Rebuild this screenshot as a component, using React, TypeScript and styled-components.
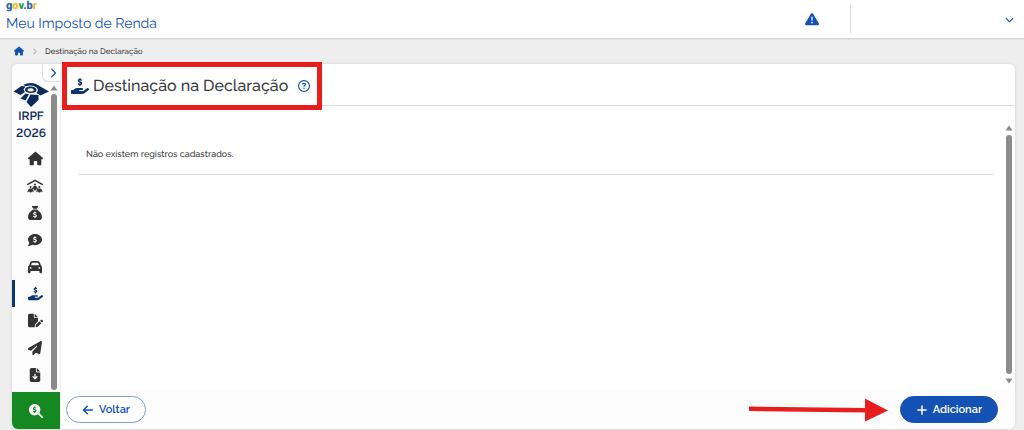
import React from "react";
import styled, { createGlobalStyle } from "styled-components";
import {
  FaArrowLeft,
  FaCar,
  FaChevronDown,
  FaChevronRight,
  FaCommentDollar,
  FaFileArrowDown,
  FaFilePen,
  FaHandHoldingDollar,
  FaHouse,
  FaMagnifyingGlassDollar,
  FaPaperPlane,
  FaPeopleRoof,
  FaPlus,
  FaRegCircleQuestion,
  FaSackDollar,
  FaTriangleExclamation,
} from "react-icons/fa6";

const blue = "#1351b4";
const navy = "#0c2a5e";
const red = "#e81e1e";

const GlobalStyle = createGlobalStyle`
  *, *::before, *::after { box-sizing: border-box; }
  body {
    margin: 0;
    background: #eeeeee;
    color: #3c3c3c;
    font-family: Raleway, "Open Sans", sans-serif;
    font-size: 10px;
    font-variant-numeric: lining-nums;
    text-rendering: geometricPrecision;
  }
  button { font: inherit; cursor: pointer; }
  svg { display: block; flex: none; }
`;

const Page = styled.div`
  display: flex;
  flex-direction: column;
  min-height: 100vh;
`;

const Header = styled.header`
  display: flex;
  align-items: center;
  justify-content: space-between;
  height: 38px;
  padding: 0 10px 0 6px;
  background: #ffffff;
  box-shadow: 0 1px 2px #d0d0d0;
`;

const Brand = styled.div`
  display: flex;
  flex-direction: column;
  height: 38px;
`;

const GovLogo = styled.div`
  font-family: Roboto, sans-serif;
  font-size: 11px;
  font-weight: 900;
  line-height: 12px;
`;

const Letter = styled.span<{ $color: string }>`
  color: ${(p) => p.$color};
`;

const AppName = styled.a`
  color: ${blue};
  font-size: 14px;
  line-height: 24px;
  text-decoration: none;
`;

const HeaderTools = styled.div`
  display: flex;
  align-items: center;
`;

const IconButton = styled.button`
  display: flex;
  align-items: center;
  padding: 0;
  border: 0;
  background: none;
  color: ${blue};
`;

const UserMenu = styled.div`
  display: flex;
  justify-content: flex-end;
  align-items: center;
  width: 164px;
  height: 28px;
  margin-left: 31px;
  border-left: 1px solid #dddddd;
`;

const Breadcrumb = styled.nav`
  display: flex;
  align-items: center;
  gap: 7px;
  height: 26px;
  padding: 0 14px;
  font-size: 8px;
  font-weight: 500;
`;

const HomeLink = styled.a`
  color: ${blue};
`;

const Separator = styled.span`
  color: #aaaaaa;
`;

const Panel = styled.div`
  display: flex;
  flex: 1;
  margin: 0 9px 1px 12px;
  border-radius: 6px;
  background: #ffffff;
  box-shadow: 0 0 3px #cccccc;
`;

const Sidebar = styled.aside`
  display: flex;
  flex-direction: column;
  width: 49px;
  border-right: 1px solid #eeeeee;
  border-radius: 6px 0 0 6px;
  background: #fcfcfc;
`;

const SidebarBody = styled.div`
  display: flex;
  flex: 1;
`;

const SidebarMain = styled.div`
  display: flex;
  flex: 1;
  flex-direction: column;
  padding-top: 18px;
`;

const SidebarEdge = styled.div`
  display: flex;
  flex-direction: column;
  align-items: flex-end;
  width: 10px;
`;

const Toggle = styled(IconButton)`
  flex: none;
  justify-content: center;
  width: 18px;
  height: 18px;
  padding-left: 2px;
  border: 1px solid #dddddd;
  border-width: 0 0 1px 1px;
  border-radius: 0 0 0 6px;
  background: #ffffff;
`;

const Product = styled.div`
  display: flex;
  flex-direction: column;
  align-items: center;
  color: ${navy};
  font-size: 12px;
  font-weight: 600;
  line-height: 17px;
`;

const Menu = styled.nav`
  display: flex;
  flex-direction: column;
  padding-top: 3px;
`;

const MenuItem = styled.a<{ $active?: boolean }>`
  display: flex;
  align-items: center;
  justify-content: center;
  height: 27px;
  padding-left: 5px;
  border-left: 3px solid ${(p) => (p.$active ? "#0c326f" : "transparent")};
  color: ${(p) => (p.$active ? "#0c326f" : "#333333")};
`;

const SearchButton = styled.button`
  display: flex;
  align-items: center;
  justify-content: center;
  height: 37px;
  border: 0;
  border-radius: 0 0 0 6px;
  background: #168821;
  color: #ffffff;
`;

const ScrollTrack = styled.div`
  display: flex;
  flex: 1;
  flex-direction: column;
  align-items: center;
  gap: 3px;
  width: 12px;
  padding: 3px 0 2px;
`;

const BodyScroll = styled(ScrollTrack)`
  flex: none;
  gap: 4px;
  padding: 4px 0 6px;
`;

const ScrollThumb = styled.div`
  flex: 1;
  width: 6px;
  border-radius: 3px;
  background: #8b8b8b;
`;

const Content = styled.main`
  display: flex;
  flex: 1;
  flex-direction: column;
  min-width: 0;
`;

const TitleBar = styled.div`
  display: flex;
  align-items: center;
  height: 42px;
  padding: 3px 10px 0;
  border-bottom: 1px solid #dddddd;
`;

const TitleGroup = styled.div`
  position: relative;
  display: flex;
  align-items: center;
  gap: 10px;
`;

const Highlight = styled.div`
  position: absolute;
  inset: -13px -12px -13px -9px;
  border: 5px solid ${red};
  pointer-events: none;
`;

const Title = styled.h1`
  display: flex;
  align-items: center;
  gap: 4px;
  margin: 0;
  font-size: 16px;
  font-weight: 500;
  line-height: 22px;
`;

const Body = styled.div`
  display: flex;
  flex: 1;
  padding-top: 15px;
`;

const Records = styled.section`
  flex: 1;
  padding: 12px 9px 0 17px;
`;

const EmptyMessage = styled.p`
  margin: 0;
  padding: 13px 8px 10px;
  border-bottom: 1px solid #dddddd;
  font-size: 9px;
  font-weight: 500;
  line-height: 18px;
`;

const Footer = styled.footer`
  display: flex;
  align-items: center;
  justify-content: space-between;
  height: 39px;
  padding: 0 17px 0 5px;
  border-radius: 0 0 6px 0;
  background: #fcfcfc;
`;

const Actions = styled.div`
  display: flex;
  align-items: center;
  gap: 12px;
`;

const Button = styled.button<{ $primary?: boolean }>`
  display: flex;
  align-items: center;
  gap: 5px;
  height: 27px;
  padding: 0 15px;
  border: 1px solid ${(p) => (p.$primary ? blue : "#7f9fd6")};
  border-radius: 14px;
  background: ${(p) => (p.$primary ? blue : "#ffffff")};
  color: ${(p) => (p.$primary ? "#ffffff" : blue)};
  font-size: 11px;
  font-weight: 600;
`;

const ReceitaLogo = () => (
  <svg width="36" height="26" viewBox="0 0 36 26" fill={navy} aria-hidden="true">
    <path d="M0.500 9.500 8.500 4 12.500 4.500 10.500 7.500 12 10 7.500 13Z" />
    <path d="M10 3Q17-0.500 23 2L36 9.500 27.500 13.500 23.500 11Q26.500 7.500 23 5 18 2.500 13 4.200Z" />
    <path fillRule="evenodd" d="M17.500 4.500c3.500 0 6 1.500 6 3.500s-2.500 3-5.500 3-6-1.200-6-3.200 2.500-3.300 5.500-3.300Zm0 1.800c-2 0-3 0.800-3 1.700s1.300 1.500 3.200 1.500 3-0.700 3-1.600-1.200-1.600-3.200-1.600Z" />
    <path d="M12.500 11.500 16 12.200 12.500 18.500 7.500 16.500Z" />
    <path d="m17.500 12.500 8 0.500v5L18 25 13.500 20Z" />
  </svg>
);

const Arrow = ({ down }: { down?: boolean }) => (
  <svg width="8" height="6" viewBox="0 0 8 6" fill="#8b8b8b" aria-hidden="true">
    <path d={down ? "M0.5 0.5h7L4 5.5Z" : "M0.5 5.5h7L4 0.5Z"} />
  </svg>
);

const menu = [
  { label: "Início", icon: FaHouse, size: 15 },
  { label: "Dependentes", icon: FaPeopleRoof, size: 16 },
  { label: "Rendimentos", icon: FaSackDollar, size: 14 },
  { label: "Pagamentos", icon: FaCommentDollar, size: 14 },
  { label: "Bens e direitos", icon: FaCar, size: 14 },
  { label: "Destinação na Declaração", icon: FaHandHoldingDollar, size: 15, active: true },
  { label: "Resumo", icon: FaFilePen, size: 15 },
  { label: "Entregar", icon: FaPaperPlane, size: 14 },
  { label: "Baixar", icon: FaFileArrowDown, size: 14 },
];

export default function App() {
  return (
    <Page>
      <GlobalStyle />
      <Header>
        <Brand>
          <GovLogo>
            <Letter $color="#2864ae">g</Letter>
            <Letter $color="#f8b91c">o</Letter>
            <Letter $color="#2f9a48">v</Letter>
            <Letter $color="#2864ae">.b</Letter>
            <Letter $color="#f8b91c">r</Letter>
          </GovLogo>
          <AppName href="#">Meu Imposto de Renda</AppName>
        </Brand>
        <HeaderTools>
          <IconButton aria-label="Avisos"><FaTriangleExclamation size={14} /></IconButton>
          <UserMenu>
            <IconButton aria-label="Menu do usuário"><FaChevronDown size={9} /></IconButton>
          </UserMenu>
        </HeaderTools>
      </Header>

      <Breadcrumb aria-label="Trilha">
        <HomeLink href="#" aria-label="Início"><FaHouse size={10} /></HomeLink>
        <Separator><FaChevronRight size={7} /></Separator>
        <span>Destinação na Declaração</span>
      </Breadcrumb>

      <Panel>
        <Sidebar>
          <SidebarBody>
            <SidebarMain>
              <Product>
                <ReceitaLogo />
                <span>IRPF</span>
                <span>2026</span>
              </Product>
              <Menu aria-label="Menu principal">
                {menu.map(({ label, icon: Icon, size, active }) => (
                  <MenuItem key={label} href="#" aria-label={label} $active={active}>
                    <Icon size={size} />
                  </MenuItem>
                ))}
              </Menu>
            </SidebarMain>
            <SidebarEdge>
              <Toggle aria-label="Expandir menu"><FaChevronRight size={10} /></Toggle>
              <ScrollTrack>
                <Arrow />
                <ScrollThumb />
              </ScrollTrack>
            </SidebarEdge>
          </SidebarBody>
          <SearchButton aria-label="Pendências"><FaMagnifyingGlassDollar size={14} /></SearchButton>
        </Sidebar>

        <Content>
          <TitleBar>
            <TitleGroup>
              <Title>
                <FaHandHoldingDollar size={18} color="#0c326f" />
                Destinação na Declaração
              </Title>
              <IconButton aria-label="Ajuda"><FaRegCircleQuestion size={12} /></IconButton>
              <Highlight />
            </TitleGroup>
          </TitleBar>
          <Body>
            <Records>
              <EmptyMessage>Não existem registros cadastrados.</EmptyMessage>
            </Records>
            <BodyScroll>
              <Arrow />
              <ScrollThumb />
              <Arrow down />
            </BodyScroll>
          </Body>
          <Footer>
            <Button><FaArrowLeft size={12} />Voltar</Button>
            <Actions>
              <svg width="139" height="24" viewBox="0 0 139 24" fill={red} aria-hidden="true">
                <path d="M0 8.500 116 10V0.500L139 12.500 116 23.500V14.500L0 13Z" />
              </svg>
              <Button $primary><FaPlus size={12} />Adicionar</Button>
            </Actions>
          </Footer>
        </Content>
      </Panel>
    </Page>
  );
}
